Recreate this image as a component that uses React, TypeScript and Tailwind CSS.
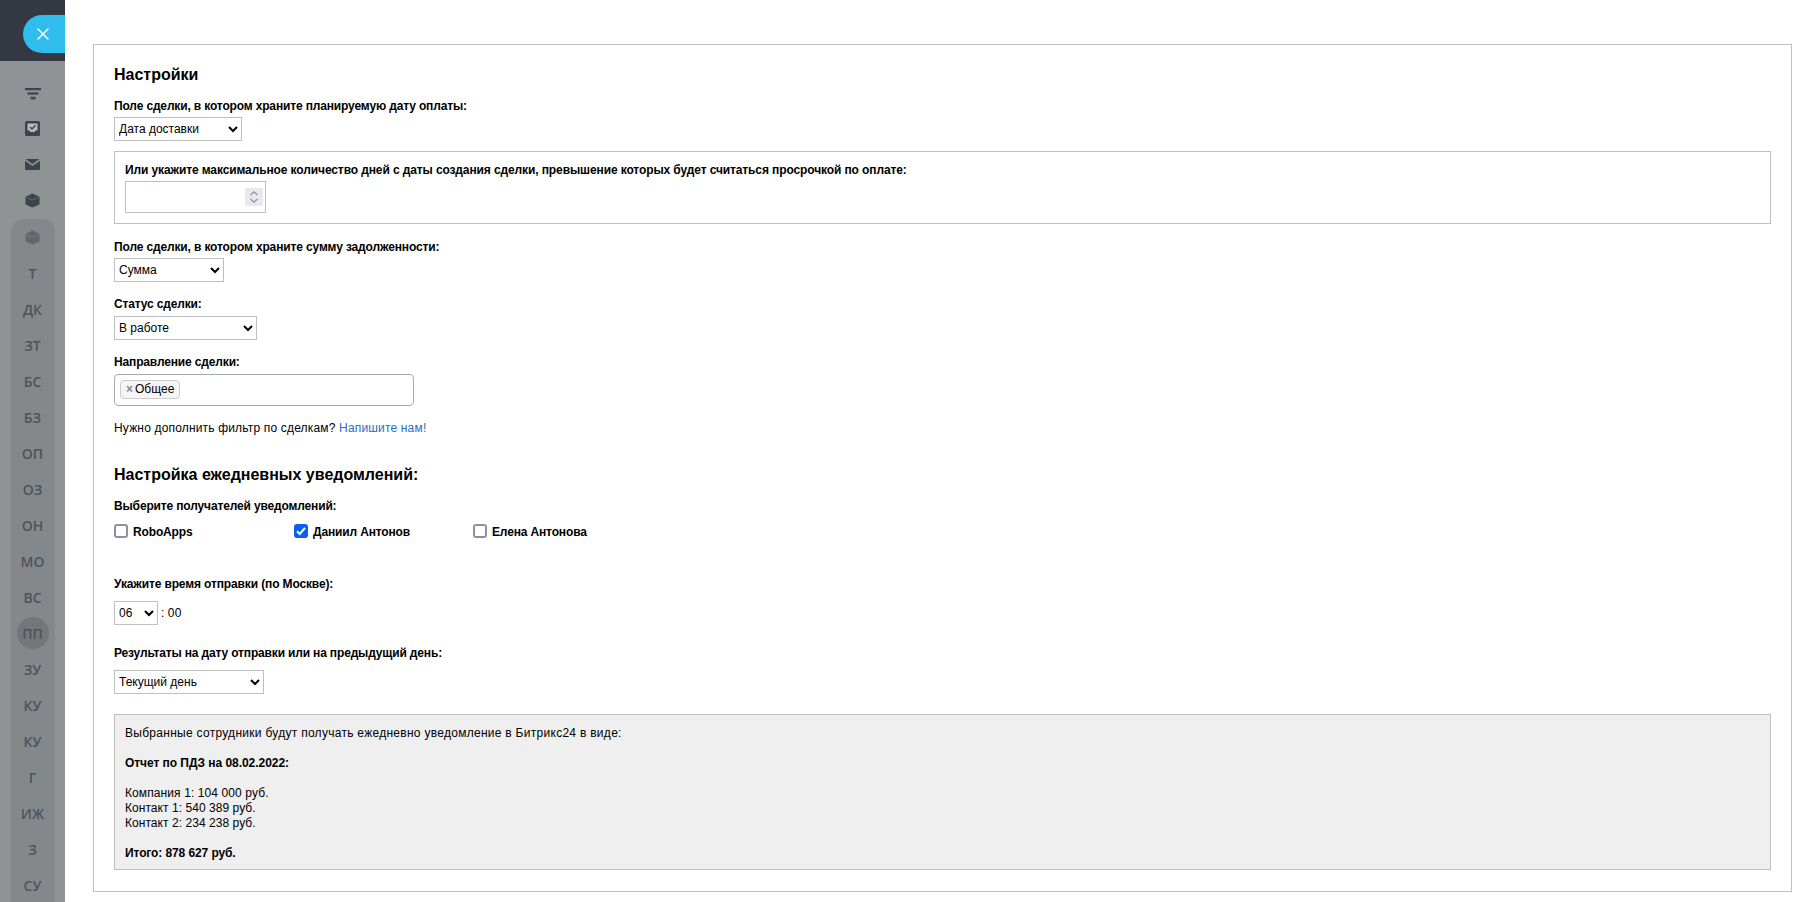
import { X } from 'lucide-react';

const SHORT = ['Т', 'ДК', 'ЗТ', 'БС', 'БЗ', 'ОП', 'ОЗ', 'ОН', 'МО', 'ВС', 'ПП', 'ЗУ', 'КУ', 'КУ', 'Г', 'ИЖ', 'З', 'СУ'];

function Cube({ className, line }: { className: string; line: string }) {
  return (
    <svg viewBox="0 0 16 16" className={className} fill="currentColor">
      <path d="M8 0.5 L14.8 3.6 Q15.5 4 15.5 4.8 V11.2 Q15.5 12 14.8 12.4 L8 15.5 L1.2 12.4 Q0.5 12 0.5 11.2 V4.8 Q0.5 4 1.2 3.6 Z" />
      <path d="M1.5 4.6 L8 7.6 L14.5 4.6" fill="none" stroke={line} strokeWidth="0.8" />
    </svg>
  );
}

function Sidebar() {
  return (
    <aside className="w-[65px] h-[902px] shrink-0 bg-[#909395] overflow-hidden font-['Open_Sans',sans-serif]">
      <div className="h-[61px] bg-[#343842] flex items-start justify-end pt-[15px]">
        <div className="w-[42px] h-[38px] bg-[#2fbdee] rounded-l-[19px] flex items-center pl-[10px]">
          <X className="w-[20px] h-[20px] text-white" strokeWidth={1.8} />
        </div>
      </div>
      <div className="flex flex-col items-center text-[#3f434c]">
        <div className="h-[32px] mt-[17px] flex items-center justify-center">
          <svg viewBox="0 0 16 12" className="w-[16px] h-[12px]" fill="currentColor">
            <rect x="0" y="0" width="16" height="2.2" />
            <rect x="2.5" y="4.4" width="11" height="2.2" />
            <rect x="5.5" y="8.8" width="5" height="2.6" />
          </svg>
        </div>
        <div className="h-[36px] flex items-center justify-center">
          <svg viewBox="0 0 15 15" className="w-[15px] h-[15px]">
            <rect width="15" height="15" rx="1.5" fill="currentColor" />
            <path d="M2.5 2.5 H12.5 V9.5 H10 V11 H5 V9.5 H2.5 Z" fill="#b9bbbd" />
            <path d="M5 6 L7 8 L10.5 4.2" fill="none" stroke="#3f434c" strokeWidth="1.3" />
          </svg>
        </div>
        <div className="h-[36px] flex items-center justify-center">
          <svg viewBox="0 0 15 11" className="w-[15px] h-[11px]" fill="currentColor">
            <path d="M0.5 0 H14.5 L7.5 5 Z" />
            <path d="M0 1.8 L7.5 7 L15 1.8 V10 Q15 11 14 11 H1 Q0 11 0 10 Z" />
          </svg>
        </div>
        <div className="h-[36px] flex items-center justify-center">
          <Cube className="w-[15px] h-[15px]" line="#72767a" />
        </div>
        <div className="w-[44px] mt-[1px] bg-[#85888a] rounded-t-[12px] flex flex-col items-center text-[14px] font-semibold text-[#4f5358]">
          <div className="h-[36px] flex items-center justify-center text-[#63676b]">
            <Cube className="w-[15px] h-[15px]" line="#787b7e" />
          </div>
          {SHORT.map((s, i) => (
            <div key={i} className="h-[36px] w-full flex items-center justify-center">
              <span className={s === 'ПП' ? 'w-[32px] h-[32px] rounded-full bg-[#74777a] flex items-center justify-center' : ''}>{s}</span>
            </div>
          ))}
        </div>
      </div>
    </aside>
  );
}

function Pick({ value, w }: { value: string; w: string }) {
  return (
    <select defaultValue={value} className={`${w} block h-[24px] border border-[#bfbfbf] bg-white text-[12px] text-black pl-0 rounded-none outline-none`}>
      <option>{value}</option>
    </select>
  );
}

function Check({ label, on, w }: { label: string; on?: boolean; w: string }) {
  return (
    <label className={`${w} flex items-center gap-[5px] font-bold text-[12px] tracking-[-0.15px]`}>
      <span className="relative w-[14px] h-[14px]">
        <input type="checkbox" defaultChecked={on} className="block appearance-none w-[14px] h-[14px] m-0 border-2 border-[#8f8f9d] rounded-[3px] bg-white checked:bg-[#0b60e6] checked:border-[#0b60e6]" />
        {on && (
          <svg viewBox="0 0 14 14" className="absolute inset-0 w-[14px] h-[14px]" fill="none" stroke="white" strokeWidth="2">
            <path d="M3 7.2 L5.8 10 L11 3.8" />
          </svg>
        )}
      </span>
      <span className="pt-[2px]">{label}</span>
    </label>
  );
}

export default function App() {
  return (
    <div className="flex w-[1806px] h-[902px] overflow-hidden bg-white font-['Liberation_Sans',Arial,sans-serif] text-black text-[12px] leading-[15px]">
      <Sidebar />
      <main className="flex-1 pl-[28px] pr-[14px] pt-[44px]">
        <div className="h-[848px] border border-[#bfbfbf] px-[20px] pt-[21px]">
          <h1 className="text-[16px] leading-[18px] font-bold">Настройки</h1>
          <div className="mt-[15px] font-bold tracking-[-0.15px]">Поле сделки, в котором храните планируемую дату оплаты:</div>
          <div className="mt-[3px]"><Pick value="Дата доставки" w="w-[128px]" /></div>
          <div className="mt-[10px] h-[73px] border border-[#bfbfbf] px-[10px] pt-[11px]">
            <div className="font-bold tracking-[-0.11px]">Или укажите максимальное количество дней с даты создания сделки, превышение которых будет считаться просрочкой по оплате:</div>
            <div className="relative w-[141px] h-[32px] mt-[3px] border border-[#bfbfbf]">
              <div className="absolute left-[119px] top-[6px] w-[18px] h-[18px] bg-[#e8e8ee] flex flex-col items-center justify-center">
                <svg viewBox="0 0 10 14" className="w-[10px] h-[14px]" fill="none" stroke="#8f8f9d" strokeWidth="1.2">
                  <path d="M1.5 5 L5 1.8 L8.5 5" />
                  <path d="M1.5 9 L5 12.2 L8.5 9" />
                </svg>
              </div>
            </div>
          </div>
          <div className="mt-[16px] font-bold tracking-[-0.14px]">Поле сделки, в котором храните сумму задолженности:</div>
          <div className="mt-[3px]"><Pick value="Сумма" w="w-[110px]" /></div>
          <div className="mt-[15px] font-bold tracking-[-0.15px]">Статус сделки:</div>
          <div className="mt-[4px]"><Pick value="В работе" w="w-[143px]" /></div>
          <div className="mt-[15px] font-bold tracking-[-0.15px]">Направление сделки:</div>
          <div className="mt-[4px] w-[300px] h-[32px] border border-[#aaaaaa] rounded-[4px] pl-[5px] pt-[5px]">
            <span className="inline-flex items-center h-[19px] w-[60px] border border-[#cccccc] bg-[#f5f5f5] rounded-[4px] pl-[5px] text-[12px]">
              <span className="text-[#888888] font-bold mr-[2px]">×</span>Общее
            </span>
          </div>
          <div className="mt-[15px] tracking-[0.17px]">Нужно дополнить фильтр по сделкам? <a className="text-[#2a6cc0]">Напишите нам!</a></div>
          <h2 className="mt-[30px] text-[16px] leading-[18px] font-bold">Настройка ежедневных уведомлений:</h2>
          <div className="mt-[15px] font-bold tracking-[-0.15px]">Выберите получателей уведомлений:</div>
          <div className="mt-[9px] flex items-center h-[16px]">
            <Check label="RoboApps" w="w-[180px]" />
            <Check label="Даниил Антонов" on w="w-[179px]" />
            <Check label="Елена Антонова" w="w-[175px]" />
          </div>
          <div className="mt-[38px] font-bold tracking-[-0.13px]">Укажите время отправки (по Москве):</div>
          <div className="mt-[9px] flex items-center gap-[3px]">
            <Pick value="06" w="w-[44px]" />
            <span className="tracking-[0.1px]">: 00</span>
          </div>
          <div className="mt-[21px] font-bold tracking-[-0.16px]">Результаты на дату отправки или на предыдущий день:</div>
          <div className="mt-[9px]"><Pick value="Текущий день" w="w-[150px]" /></div>
          <div className="mt-[20px] h-[156px] border border-[#bfbfbf] bg-[#efefef] px-[10px] pt-[11px]">
            <div className="tracking-[0.28px]">Выбранные сотрудники будут получать ежедневно уведомление в Битрикс24 в виде:</div>
            <div className="mt-[15px] font-bold tracking-[-0.05px]">Отчет по ПДЗ на 08.02.2022:</div>
            <div className="mt-[15px] tracking-[0.1px]">Компания 1: 104 000 руб.</div>
            <div className="tracking-[0.05px]">Контакт 1: 540 389 руб.</div>
            <div className="tracking-[0.05px]">Контакт 2: 234 238 руб.</div>
            <div className="mt-[15px] font-bold tracking-[-0.1px]">Итого: 878 627 руб.</div>
          </div>
        </div>
      </main>
    </div>
  );
}
